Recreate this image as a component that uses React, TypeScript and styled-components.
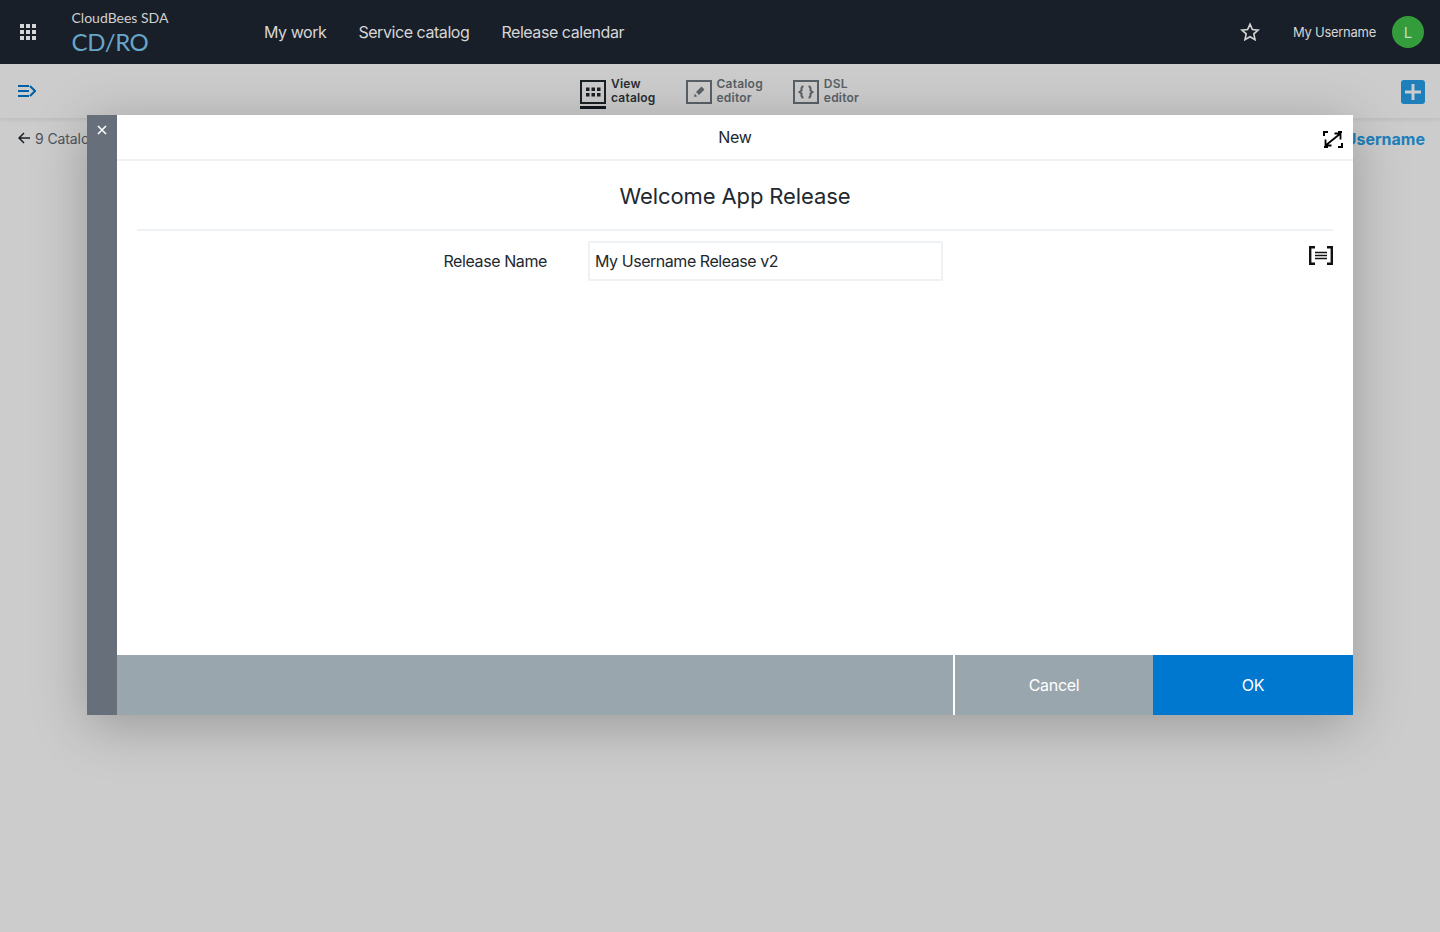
import React from "react";
import styled, { createGlobalStyle } from "styled-components";

const GlobalStyle = createGlobalStyle`
  html, body {
    margin: 0;
    padding: 0;
    height: 100%;
    background: #fff;
    font-family: "Inter", "Liberation Sans", sans-serif;
    overflow: hidden;
  }
`;

const Page = styled.div`
  position: relative;
  width: 1440px;
  height: 932px;
  overflow: hidden;
`;

const TopBar = styled.header`
  display: flex;
  align-items: center;
  height: 64px;
  background: #181f29;
  color: #d6d6d6;
`;

const AppsButton = styled.div`
  display: flex;
  width: 56px;
  justify-content: center;
`;

const Logo = styled.div`
  display: flex;
  flex-direction: column;
  width: 192.5px;
  margin-left: 15.5px;
  padding-top: 1px;
  font-family: "Lato", sans-serif;
`;

const LogoTop = styled.span`
  font-size: 14px;
  line-height: 17px;
  color: #d0d0d0;
`;

const LogoBottom = styled.span`
  font-size: 24px;
  line-height: 31px;
  letter-spacing: -0.4px;
  color: #67a6c8;
`;

const Nav = styled.nav`
  display: flex;
  gap: 32px;
  flex: 1;
`;

const NavItem = styled.a`
  font-size: 16px;
  letter-spacing: -0.44px;
  color: #d6d6d6;
`;

const UserArea = styled.div`
  display: flex;
  align-items: center;
  padding-right: 16px;
`;

const UserName = styled.span`
  font-size: 13px;
  letter-spacing: -0.27px;
  margin: 0 16px 0 33px;
  color: #d6d6d6;
`;

const Avatar = styled.span`
  display: flex;
  width: 32px;
  height: 32px;
  border-radius: 50%;
  align-items: center;
  justify-content: center;
  background: #359c3b;
  color: #c4dcc5;
  font-size: 15px;
`;

const SubBar = styled.div`
  display: flex;
  align-items: center;
  justify-content: space-between;
  height: 54px;
  padding: 0 15px 0 18px;
  box-shadow: 0 2px 4px rgba(0, 0, 0, 0.08);
`;

const Tabs = styled.div`
  display: flex;
  gap: 30px;
  margin-left: 2px;
`;

const Tab = styled.div<{ $active?: boolean }>`
  position: relative;
  display: flex;
  align-items: center;
  gap: 5px;
  height: 54px;
  font-size: 12px;
  font-weight: 600;
  line-height: 14px;
  letter-spacing: 0.2px;
  color: ${(p) => (p.$active ? "#33393f" : "#707980")};

  &::after {
    content: "";
    display: ${(p) => (p.$active ? "block" : "none")};
    position: absolute;
    left: 0;
    bottom: 9px;
    width: 26px;
    height: 3px;
    background: #181f29;
  }
`;

const TabIcon = styled.span<{ $active?: boolean }>`
  display: flex;
  width: 26px;
  height: 24px;
  box-sizing: border-box;
  align-items: center;
  justify-content: center;
  border: 2.5px solid ${(p) => (p.$active ? "#22282f" : "#707980")};
  margin-top: 1px;
`;

const AddButton = styled.span`
  display: flex;
  width: 24px;
  height: 24px;
  margin-top: 2px;
  border-radius: 3px;
  background: #279fea;
  align-items: center;
  justify-content: center;
`;

const BackRow = styled.div`
  display: flex;
  align-items: center;
  justify-content: space-between;
  padding: 0 15px 0 18px;
  height: 40px;
`;

const BackLink = styled.span`
  display: flex;
  align-items: center;
  gap: 5px;
  font-size: 14px;
  letter-spacing: -0.1px;
  color: #5f6b76;
`;

const Owner = styled.span`
  margin-top: 2px;
  font-size: 16px;
  font-weight: 700;
  color: #279fea;
`;

const Overlay = styled.div`
  position: absolute;
  top: 64px;
  left: 0;
  right: 0;
  bottom: 0;
  display: flex;
  justify-content: center;
  align-items: flex-start;
  padding-top: 51px;
  box-sizing: border-box;
  background: rgba(0, 0, 0, 0.2);
`;

const Modal = styled.div`
  display: flex;
  width: 1266px;
  height: 600px;
  background: #fff;
  box-shadow: 0 10px 50px rgba(0, 0, 0, 0.25);
`;

const SideStrip = styled.div`
  display: flex;
  justify-content: center;
  width: 30px;
  padding-top: 10px;
  box-sizing: border-box;
  background: #67707a;
`;

const Main = styled.div`
  display: flex;
  flex-direction: column;
  flex: 1;
`;

const ModalHeader = styled.div`
  position: relative;
  display: flex;
  align-items: center;
  justify-content: center;
  height: 44px;
  border-bottom: 2px solid #eef2f5;
  font-size: 16px;
  letter-spacing: -0.3px;
  color: #22282f;
`;

const ExpandButton = styled.span`
  position: absolute;
  right: 9px;
  top: 15px;
  display: flex;
`;

const Body = styled.div`
  flex: 1;
  padding: 0 20px;
`;

const ReleaseTitle = styled.h2`
  margin: 0;
  height: 68px;
  border-bottom: 2px solid #eef2f5;
  font-size: 22px;
  font-weight: 400;
  line-height: 71px;
  letter-spacing: -0.1px;
  text-align: center;
  color: #22282f;
`;

const FormRow = styled.div`
  display: grid;
  grid-template-columns: 410px 355px 1fr;
  column-gap: 41px;
  align-items: center;
  margin-top: 10px;
`;

const FieldLabel = styled.label`
  font-size: 16px;
  letter-spacing: -0.4px;
  text-align: right;
  color: #22282f;
`;

const TextField = styled.input`
  height: 40px;
  width: 355px;
  box-sizing: border-box;
  padding: 0 5px;
  border: 2px solid #eef2f5;
  outline: none;
  font-family: inherit;
  font-size: 16px;
  letter-spacing: -0.45px;
  color: #22282f;
`;

const Notation = styled.span`
  display: flex;
  justify-content: flex-end;
  margin-top: -12px;
`;

const Footer = styled.div`
  display: flex;
  height: 60px;
  background: #9aa6ae;
`;

const FooterSpacer = styled.div`
  flex: 1;
  border-right: 2px solid #fff;
`;

const FooterButton = styled.button<{ $primary?: boolean }>`
  width: ${(p) => (p.$primary ? "200px" : "198px")};
  border: 0;
  background: ${(p) => (p.$primary ? "#0078cf" : "transparent")};
  color: #fff;
  font-family: inherit;
  font-size: 16px;
  letter-spacing: -0.3px;
`;

const AppsIcon = () => (
  <svg width="16" height="16" viewBox="0 0 16 16" fill="#d6d6d6">
    {[0, 6, 12].map((y) =>
      [0, 6, 12].map((x) => <rect key={`${x}-${y}`} x={x} y={y} width="4" height="4" />)
    )}
  </svg>
);

const StarIcon = () => (
  <svg width="20" height="20" viewBox="0 0 20 20" fill="none" stroke="#d6d6d6" strokeWidth="1.6">
    <path d="M10 2.2l2.4 5.3 5.7.6-4.3 3.8 1.2 5.7-5-2.9-5 2.9 1.2-5.7-4.3-3.8 5.7-.6z" />
  </svg>
);

const MenuIcon = () => (
  <svg width="18" height="14" viewBox="0 0 18 14" fill="none" stroke="#0078cf" strokeWidth="2">
    <path d="M0 2h11M0 7h11M0 12h11M12 2l5 5-5 5" />
  </svg>
);

const GridIcon = () => (
  <svg width="16" height="12" viewBox="0 0 16 12" fill="#22282f">
    {[1.5, 7].map((y) =>
      [1, 6.5, 12].map((x) => <rect key={`${x}-${y}`} x={x} y={y} width="3.5" height="3.5" />)
    )}
  </svg>
);

const PencilIcon = () => (
  <svg width="14" height="14" viewBox="0 0 14 14" fill="#707980">
    <path d="M9.5 1.5l3 3L7 10 4 7zM2 12l.8-3.2 2.4 2.4z" />
  </svg>
);

const BracesIcon = () => (
  <svg width="16" height="14" viewBox="0 0 16 14" fill="none" stroke="#707980" strokeWidth="2">
    <path d="M5.5 1.5h-1l-1 1.5v2.5L1.5 7l2 1.5V11l1 1.5h1M10.5 1.5h1l1 1.5v2.5l2 1.5-2 1.5V11l-1 1.5h-1" />
  </svg>
);

const PlusIcon = () => (
  <svg width="16" height="16" viewBox="0 0 16 16" stroke="#fff" strokeWidth="3">
    <path d="M8 0v16M0 8h16" />
  </svg>
);

const ArrowLeftIcon = () => (
  <svg width="12" height="12" viewBox="0 0 12 12" fill="none" stroke="#22282f" strokeWidth="1.5">
    <path d="M12 6H1M6 1L1 6l5 5" />
  </svg>
);

const CloseIcon = () => (
  <svg width="10" height="10" viewBox="0 0 10 10" stroke="#fff" strokeWidth="1.6">
    <path d="M1 1l8 8M9 1l-8 8" />
  </svg>
);

const ExpandIcon = () => (
  <svg width="22" height="19" viewBox="0 0 22 19" fill="none" stroke="#000" strokeWidth="2">
    <path d="M2 6V2h4M16 2h4M2 17h4M16 17h4v-4" />
    <path d="M3.5 15.5L18.5 3.5M12.5 3.5h6v6M3.5 9.5v6h6" strokeWidth="1.8" />
  </svg>
);

const NotationIcon = () => (
  <svg width="24" height="19" viewBox="0 0 24 19" fill="none" stroke="#111" strokeWidth="2.4">
    <path d="M6 1.2H1.2v16.6H6M18 1.2h4.8v16.6H18" />
    <path d="M6 6.5h12M6 9.5h12M6 12.5h12" strokeWidth="1.4" />
  </svg>
);

const App: React.FC = () => (
  <Page>
    <GlobalStyle />
    <TopBar>
      <AppsButton>
        <AppsIcon />
      </AppsButton>
      <Logo>
        <LogoTop>CloudBees SDA</LogoTop>
        <LogoBottom>CD/RO</LogoBottom>
      </Logo>
      <Nav>
        <NavItem>My work</NavItem>
        <NavItem>Service catalog</NavItem>
        <NavItem>Release calendar</NavItem>
      </Nav>
      <UserArea>
        <StarIcon />
        <UserName>My Username</UserName>
        <Avatar>L</Avatar>
      </UserArea>
    </TopBar>
    <SubBar>
      <MenuIcon />
      <Tabs>
        <Tab $active>
          <TabIcon $active>
            <GridIcon />
          </TabIcon>
          <span>
            View
            <br />
            catalog
          </span>
        </Tab>
        <Tab>
          <TabIcon>
            <PencilIcon />
          </TabIcon>
          <span>
            Catalog
            <br />
            editor
          </span>
        </Tab>
        <Tab>
          <TabIcon>
            <BracesIcon />
          </TabIcon>
          <span>
            DSL
            <br />
            editor
          </span>
        </Tab>
      </Tabs>
      <AddButton>
        <PlusIcon />
      </AddButton>
    </SubBar>
    <BackRow>
      <BackLink>
        <ArrowLeftIcon />9 Catalog items
      </BackLink>
      <Owner>My Username</Owner>
    </BackRow>
    <Overlay>
      <Modal>
        <SideStrip>
          <CloseIcon />
        </SideStrip>
        <Main>
          <ModalHeader>
            New
            <ExpandButton>
              <ExpandIcon />
            </ExpandButton>
          </ModalHeader>
          <Body>
            <ReleaseTitle>Welcome App Release</ReleaseTitle>
            <FormRow>
              <FieldLabel>Release Name</FieldLabel>
              <TextField defaultValue="My Username Release v2" />
              <Notation>
                <NotationIcon />
              </Notation>
            </FormRow>
          </Body>
          <Footer>
            <FooterSpacer />
            <FooterButton>Cancel</FooterButton>
            <FooterButton $primary>OK</FooterButton>
          </Footer>
        </Main>
      </Modal>
    </Overlay>
  </Page>
);

export default App;
